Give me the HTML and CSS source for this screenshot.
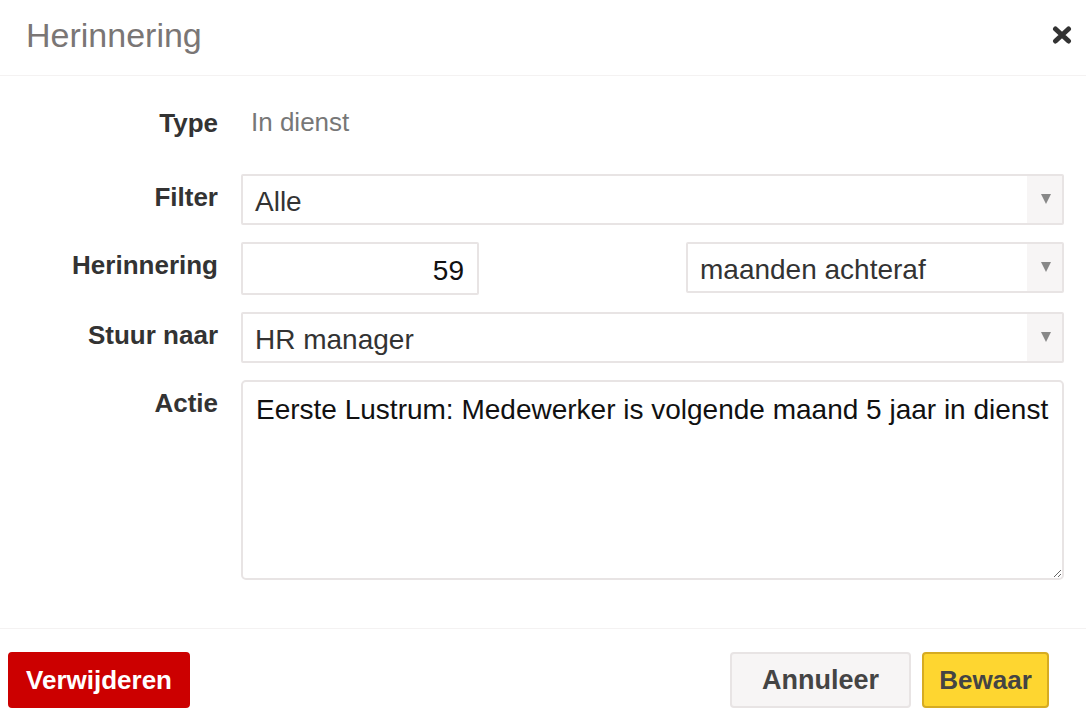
FILE: index.html
```html
<!DOCTYPE html>
<html lang="nl">
<head>
<meta charset="utf-8">
<link rel="stylesheet" href="styles.css">
</head>
<body>
<div class="modal">
  <header class="modal-header">
    <h1 class="modal-title">Herinnering</h1>
    <button class="close" aria-label="Sluiten">
      <svg width="20" height="18" viewBox="0 0 20 18"><path d="M3.5 3 L16.5 15 M16.5 3 L3.5 15" stroke="#333" stroke-width="5" stroke-linecap="round"/></svg>
    </button>
  </header>
  <main class="modal-body">
    <div class="row row-type">
      <label class="label">Type</label>
      <div class="static">In dienst</div>
    </div>
    <div class="row">
      <label class="label">Filter</label>
      <div class="select"><span class="value">Alle</span><span class="arrow"></span></div>
    </div>
    <div class="row">
      <label class="label">Herinnering</label>
      <div class="split">
        <div class="input number">59</div>
        <div class="select half"><span class="value">maanden achteraf</span><span class="arrow"></span></div>
      </div>
    </div>
    <div class="row">
      <label class="label">Stuur naar</label>
      <div class="select"><span class="value">HR manager</span><span class="arrow"></span></div>
    </div>
    <div class="row">
      <label class="label">Actie</label>
      <textarea class="textarea">Eerste Lustrum: Medewerker is volgende maand 5 jaar in dienst</textarea>
    </div>
  </main>
  <footer class="modal-footer">
    <button class="btn btn-danger">Verwijderen</button>
    <div class="right-btns">
      <button class="btn btn-default">Annuleer</button>
      <button class="btn btn-primary">Bewaar</button>
    </div>
  </footer>
</div>
</body>
</html>
```
FILE: styles.css
```css
* { box-sizing: border-box; }
html, body { margin: 0; padding: 0; background: #fff; }
body {
  font-family: "Liberation Sans", Arial, Helvetica, sans-serif;
  color: #333;
  width: 1086px;
  height: 716px;
  overflow: hidden;
}
.modal-header {
  height: 76px;
  border-bottom: 1px solid #f4f2f2;
  display: flex;
  align-items: flex-start;
  justify-content: space-between;
  padding: 0 14px 0 26px;
}
.modal-title {
  margin: 0;
  padding-top: 15px;
  font-size: 34px;
  font-weight: normal;
  line-height: 40px;
  color: #7a7675;
}
.close {
  border: 0;
  background: none;
  padding: 0;
  margin-top: 26px;
  width: 20px;
  height: 18px;
  display: flex;
}
.modal-body {
  padding: 24px 22px 48px 0;
}
.row {
  display: grid;
  grid-template-columns: 218px 1fr;
  column-gap: 23px;
  margin-bottom: 17px;
}
.row:last-child { margin-bottom: 0; }
.row-type { margin-bottom: 36px; }
.label {
  text-align: right;
  font-weight: bold;
  font-size: 26px;
  line-height: 30px;
  padding-top: 8px;
  color: #333;
}
.static {
  font-size: 26px;
  line-height: 30px;
  padding-top: 7px;
  padding-left: 10px;
  color: #777;
}
.select, .input {
  height: 51px;
  border: 2px solid #e8e4e4;
  border-radius: 2px;
  display: flex;
  align-items: center;
  font-size: 28px;
  color: #333;
  background: #fff;
}
.select .value {
  flex: 1;
  padding-left: 12px;
  padding-top: 4px;
}
.select .arrow {
  width: 35px;
  align-self: stretch;
  background: #f7f5f5;
  position: relative;
}
.select .arrow::after {
  content: "";
  position: absolute;
  left: 14px;
  top: 18px;
  border-left: 5px solid transparent;
  border-right: 5px solid transparent;
  border-top: 10px solid #888;
}
.split {
  display: flex;
  justify-content: space-between;
  align-items: flex-start;
}
.number {
  width: 238px;
  height: 53px;
  justify-content: flex-end;
  padding-right: 13px;
  padding-top: 4px;
  color: #111;
}
.half { width: 378px; }
.textarea {
  display: block;
  width: 100%;
  height: 200px;
  border: 2px solid #e8e4e4;
  border-radius: 5px;
  font-family: "Liberation Sans", Arial, Helvetica, sans-serif;
  font-size: 28px;
  line-height: 32px;
  padding: 12px 13px;
  color: #111;
  resize: vertical;
  outline: none;
}
.modal-footer {
  border-top: 1px solid #f4f2f2;
  padding: 23px 37px 0 8px;
  display: flex;
  justify-content: space-between;
}
.right-btns { display: flex; gap: 11px; }
.btn {
  height: 56px;
  border-radius: 4px;
  font-family: "Liberation Sans", Arial, Helvetica, sans-serif;
  font-weight: bold;
  font-size: 26px;
  padding: 0 10px;
  border: 2px solid transparent;
}
.btn-danger {
  background: #cc0000;
  border-color: #cc0000;
  color: #fff;
  width: 182px;
}
.btn-default {
  background: #f7f5f5;
  border-color: #e8e4e4;
  color: #444;
  width: 181px;
  font-size: 27px;
}
.btn-primary {
  background: #fed630;
  border-color: #d6ab22;
  color: #444;
  width: 127px;
}
```
